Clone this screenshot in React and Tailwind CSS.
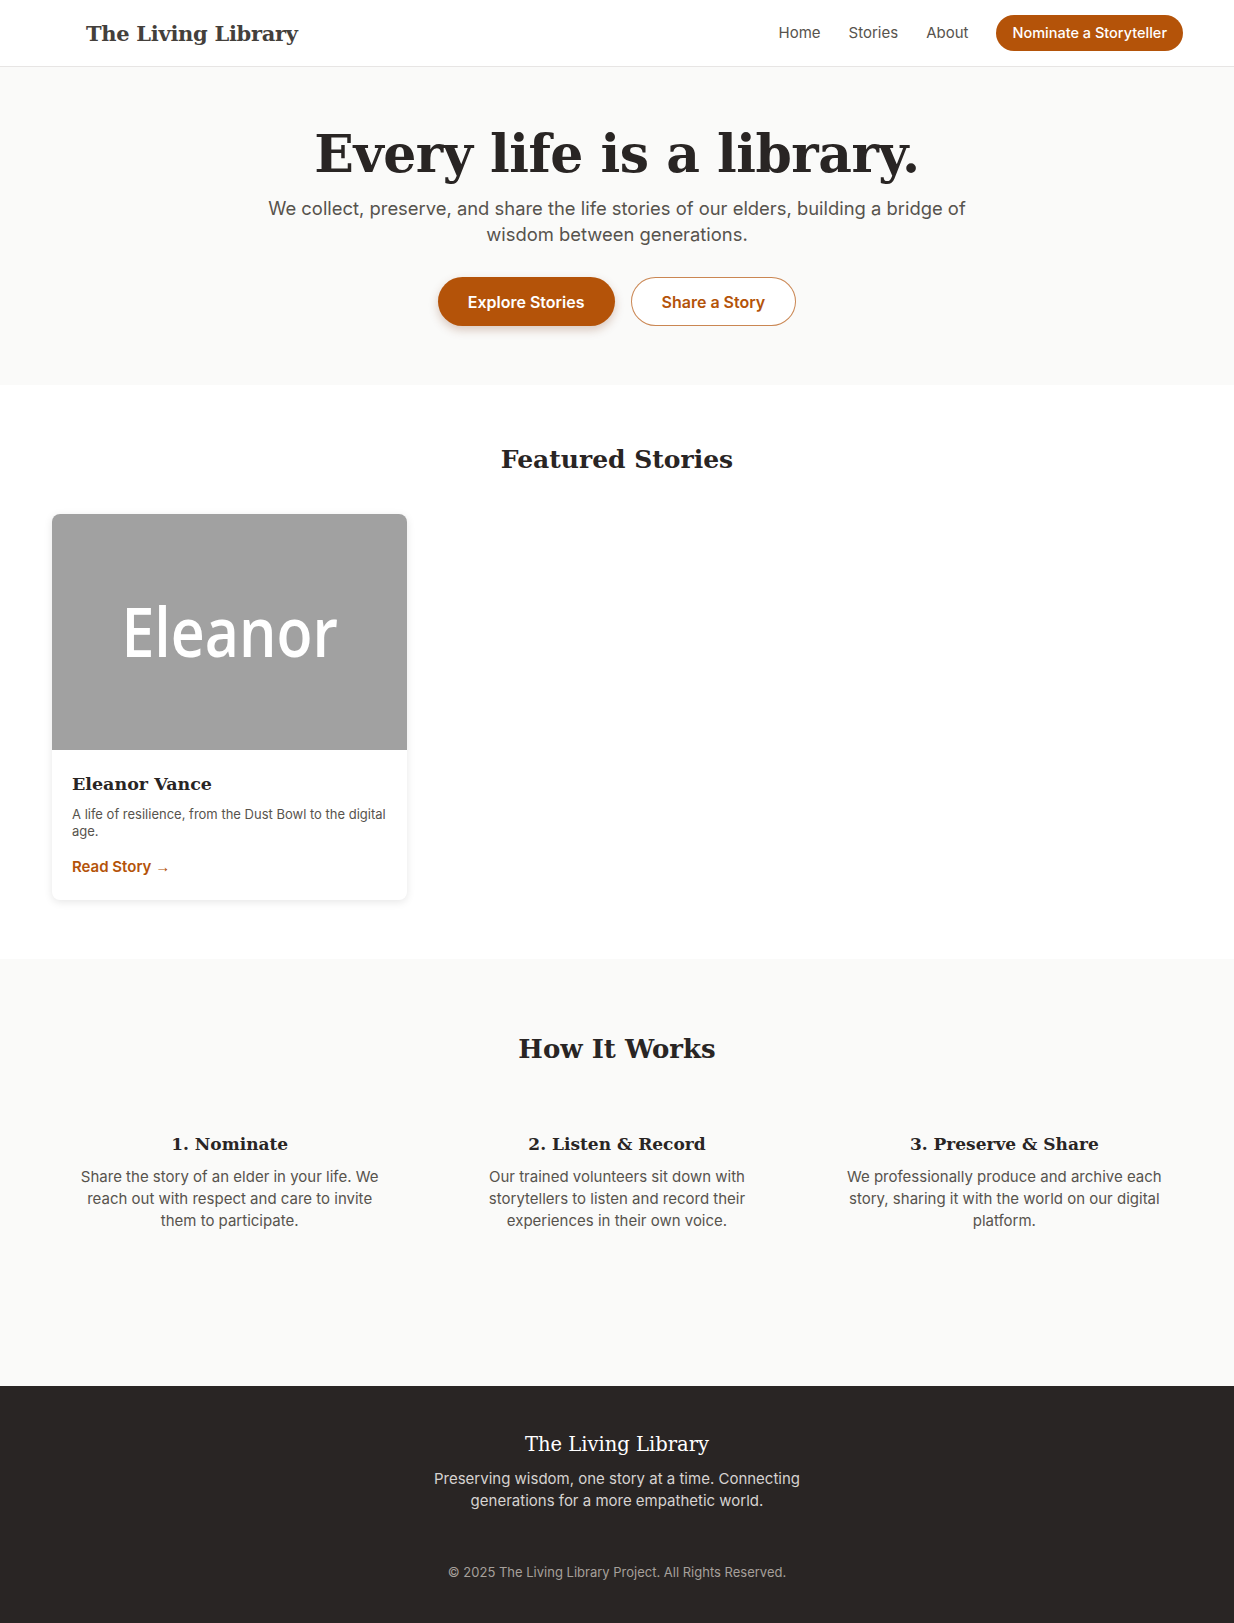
import React from "react";

// =====================================================
// Content
// =====================================================
const navLinks = ["Home", "Stories", "About"];

const featuredStories = [
  {
    id: 1,
    label: "Eleanor",
    name: "Eleanor Vance",
    blurb: "A life of resilience, from the Dust Bowl to the digital age.",
  },
];

const steps = [
  {
    title: "1. Nominate",
    text: "Share the story of an elder in your life. We reach out with respect and care to invite them to participate.",
  },
  {
    title: "2. Listen & Record",
    text: "Our trained volunteers sit down with storytellers to listen and record their experiences in their own voice.",
  },
  {
    title: "3. Preserve & Share",
    text: "We professionally produce and archive each story, sharing it with the world on our digital platform.",
  },
];

const serif = "font-['DejaVu_Serif',Georgia,serif]";

// =====================================================
// Page
// =====================================================
export default function App() {
  return (
    <div className="min-h-screen bg-white font-['Inter','Liberation_Sans',sans-serif] text-stone-800">
      <Header />
      <Hero />
      <Featured />
      <HowItWorks />
      <Footer />
    </div>
  );
}

function Header() {
  return (
    <header className="h-[67px] bg-white border-b border-stone-200 flex items-center justify-between pl-[86px] pr-[51px]">
      <a className={`${serif} text-[21px] font-bold text-stone-700 tracking-[-0.3px] mt-[2px]`}>
        The Living Library
      </a>
      <nav className="flex items-center gap-7">
        {navLinks.map((link) => (
          <a key={link} className="text-[15px] text-stone-600">
            {link}
          </a>
        ))}
        <a className="bg-[#b45309] text-white text-[14.5px] font-medium leading-5 px-4 py-2 rounded-full">
          Nominate a Storyteller
        </a>
      </nav>
    </header>
  );
}

function Hero() {
  return (
    <section className="bg-stone-50 pt-[57px] pb-[59px] flex flex-col items-center text-center">
      <h1 className={`${serif} text-[52px] leading-[60px] font-bold text-stone-800 tracking-[-0.5px]`}>
        Every life is a library.
      </h1>
      <p className="mt-[11px] max-w-[730px] text-[18.4px] leading-[26px] text-stone-600">
        We collect, preserve, and share the life stories of our elders, building a bridge of
        wisdom between generations.
      </p>
      <div className="mt-[30px] flex items-center gap-4">
        <a className="h-[49px] px-[30px] flex items-center rounded-full bg-[#b45309] text-white text-base font-semibold shadow-[0_4px_10px_rgba(120,53,15,0.25)]">
          Explore Stories
        </a>
        <a className="h-[49px] px-[30px] flex items-center rounded-full bg-white border border-[#b45309]/70 text-[#b45309] text-base font-semibold">
          Share a Story
        </a>
      </div>
    </section>
  );
}

function Featured() {
  return (
    <section className="bg-white pt-[57px] pb-[59px] px-[52px]">
      <h2 className={`${serif} text-[25px] leading-9 font-bold text-center text-stone-800`}>
        Featured Stories
      </h2>
      <div className="mt-[36px] grid grid-cols-3 gap-8">
        {featuredStories.map((story) => (
          <article
            key={story.id}
            className="bg-white rounded-lg overflow-hidden shadow-[0_2px_8px_rgba(0,0,0,0.1)]"
          >
            <div className="h-[236px] bg-neutral-400 flex items-center justify-center overflow-hidden">
              <span className="font-['Open_Sans',sans-serif] font-semibold text-[59px] text-white scale-y-[1.15] -mt-[2px]">
                {story.label}
              </span>
            </div>
            <div className="px-5 pt-[20px] pb-[23px]">
              <h3 className={`${serif} text-[17.5px] leading-7 font-bold text-stone-800`}>
                {story.name}
              </h3>
              <p className="mt-2 text-[13px] leading-[17px] text-stone-600">{story.blurb}</p>
              <a className="mt-[17px] block text-[15px] leading-5 font-semibold text-[#b45309]">
                Read Story <span className="font-['Liberation_Sans',sans-serif] font-normal">→</span>
              </a>
            </div>
          </article>
        ))}
      </div>
    </section>
  );
}

function HowItWorks() {
  return (
    <section className="bg-stone-50 pt-[72px] pb-[154px] px-[52px]">
      <h2 className={`${serif} text-[26px] leading-9 font-bold text-center text-stone-800`}>
        How It Works
      </h2>
      <div className="mt-[63px] grid grid-cols-3 gap-8">
        {steps.map((step) => (
          <div key={step.title} className="px-4 text-center">
            <h3 className={`${serif} text-[17px] leading-7 font-bold text-stone-800`}>
              {step.title}
            </h3>
            <p className="mt-2 text-[15px] leading-[22px] text-stone-600">{step.text}</p>
          </div>
        ))}
      </div>
    </section>
  );
}

function Footer() {
  return (
    <footer className="bg-stone-800 pt-[43px] pb-[41px] flex flex-col items-center text-center">
      <h2 className={`${serif} text-[19.5px] leading-8 text-white`}>The Living Library</h2>
      <p className="mt-[7px] max-w-[380px] text-[15px] leading-[22px] text-stone-300">
        Preserving wisdom, one story at a time. Connecting generations for a more empathetic
        world.
      </p>
      <p className="mt-[50px] text-[13px] leading-5 text-stone-400">
        © 2025 The Living Library Project. All Rights Reserved.
      </p>
    </footer>
  );
}
